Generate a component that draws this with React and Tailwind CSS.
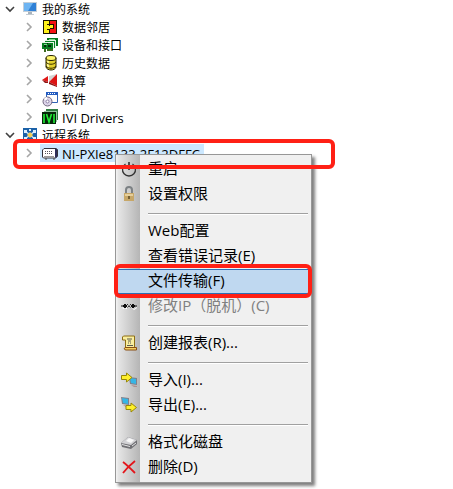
const SANS = 'font-["Open_Sans","Noto_Sans_CJK_SC",sans-serif]';

function Icon({ children }) {
  return (
    <svg className="size-4 shrink-0" viewBox="0 0 16 16" aria-hidden="true">
      {children}
    </svg>
  );
}

function MonitorIcon() {
  return (
    <Icon>
      <path d="M1 1h14v10H1z" fill="#c3ced8" />
      <path d="M2 2h12v8H2z" fill="#2f80d6" />
      <path d="M2 2h9L6 10H2z" fill="#6db4f2" />
      <path d="M6 11h4v2H6z" fill="#a9b3bc" />
      <path d="M4 13h8v1H4z" fill="#c3cbd2" />
    </Icon>
  );
}

function PuzzleIcon() {
  return (
    <Icon>
      <g shapeRendering="crispEdges">
        <path d="M1 1h14v14H1z" fill="#1a1400" />
        <path d="M2 2h5v12H2z" fill="#fff21a" />
        <path d="M7 2h7v12H7z" fill="#f51212" />
        <path d="M7 6h4v4H7z" fill="#fff21a" />
        <path d="M7.500 2v4.500M5 5.500h3M8 5.500h3.500v4H7.500M5 10.500h3M7.500 10v4" fill="none" stroke="#201000" />
      </g>
    </Icon>
  );
}

function BoardsIcon() {
  return (
    <Icon>
      <g shapeRendering="crispEdges">
        <path d="M5 1h11v8H5z" fill="#087820" />
        <path d="M3 3h11v8H3z" fill="#e4f4e4" />
        <path d="M3 4h10v7H3z" fill="#0a8226" />
        <path d="M0 5h12v7H0z" fill="#e8f6e8" />
        <path d="M0 6h11v6H0z" fill="#087d20" />
        <path d="M2 8h2v2H2zM6 8h3v2H6zM5 6h1v1H5z" fill="#03270a" />
        <path d="M2 12h2v3H2zM5 12h6v2H5z" fill="#3c6b20" />
        <path d="M7 2h6M2 7h3" stroke="#7bdc8c" />
      </g>
    </Icon>
  );
}

function DatabaseIcon() {
  return (
    <Icon>
      <path d="M4 3v9c1 4 9 4 10 0V3z" fill="#e3d02c" stroke="#242000" />
      <path d="M5 5v8h2V6z" fill="#fff78c" />
      <ellipse cx="9" cy="3" rx="5" ry="2.500" fill="#fff56a" stroke="#242000" />
      <path d="M4 7c2 3 8 3 10 0M4 11c2 3 8 3 10 0" fill="none" stroke="#393000" />
    </Icon>
  );
}

function ScaleIcon() {
  return (
    <Icon>
      <path d="M0 7l6-4v6z" fill="#e01818" />
      <path d="M0 7l6 2v1H3z" fill="#8e1414" />
      <path d="M7 3l8-2-8 8z" fill="#d4d4d4" />
      <path d="M15 1v12L7 9z" fill="#dc1414" />
      <path d="M7 9l8 4v1L7 11z" fill="#8e1010" />
    </Icon>
  );
}

function SoftwareIcon() {
  return (
    <Icon>
      <path d="M4.500 1.500h11v10h-11z" fill="#fff" stroke="#2f62b5" />
      <path d="M4 1h12v3H4z" fill="#245cc0" />
      <path d="M6 2.500h8" stroke="#fff" strokeDasharray="1 1" />
      <circle cx="5.500" cy="10.500" r="4.500" fill="#ddd5ea" stroke="#71677f" />
      <path d="M5.500 10.500L2 8a4 4 0 0 1 3-2z" fill="#fff" />
      <circle cx="5.500" cy="10.500" r="1.500" fill="#fff" stroke="#8c80a6" />
    </Icon>
  );
}

function IviIcon() {
  return (
    <Icon>
      <path d="M4 0h12v11H4z" fill="#2f7d41" />
      <path d="M2 2h13v11H2z" fill="#8ec79a" />
      <path d="M0 3h14v12H0z" fill="#062408" />
      <path d="M2 5v9M4.500 5l2.500 8 2.500-8M12 5v9" fill="none" stroke="#20ee36" strokeWidth="1.600" />
    </Icon>
  );
}

function NetworkIcon() {
  return (
    <Icon>
      <path d="M1 1h14v14H1z" fill="#1b61a8" />
      <path d="M3 4l10 8M13 4L3 12" stroke="#cfe6fa" strokeWidth="1.500" />
      <path d="M2 3h3v3H2zM11 3h3v3h-3zM2 10h3v3H2zM11 10h3v3h-3zM7 2h2v2H7z" fill="#dcefff" />
      <path d="M8 5l3 3-3 3-3-3z" fill="#f4cf55" />
      <path d="M7 12h2v2H7z" fill="#6fb3ea" />
    </Icon>
  );
}

function ChassisIcon() {
  return (
    <Icon>
      <path d="M2 3.500h12l1.500 1v7l-2 1.500H1.500L.5 12V5z" fill="#fff" stroke="#33333b" />
      <path d="M13 4h2v8l-2 1z" fill="#2c2c58" />
      <path d="M3.500 6v4M5.500 6v4M7.500 6v4M9.500 6v4" stroke="#55555d" strokeDasharray="1 1" />
      <path d="M2 11.500h10" stroke="#9a9a9a" />
      <path d="M3 14h2M11 14h2" stroke="#444" />
    </Icon>
  );
}

function PowerIcon() {
  return (
    <Icon>
      <path d="M4.500 3a6.500 6.500 0 1 0 7 0" fill="none" stroke="#333" strokeWidth="1.300" />
      <path d="M8 1v8" stroke="#222" strokeWidth="1.500" />
    </Icon>
  );
}

function LockIcon() {
  return (
    <Icon>
      <path d="M5 8V4c0-4 6-4 6 0v4" fill="none" stroke="#7c8184" strokeWidth="2" />
      <path d="M3 7h10v8H3z" fill="#c7a768" />
      <path d="M4 8h8v2H4z" fill="#e6cf9b" />
      <path d="M7 10h2v3H7z" fill="#745e33" />
    </Icon>
  );
}

function AddressIcon() {
  return (
    <Icon>
      <path d="M1 9l3 2 2-2v2H2zM10 9l3 2 3-2v1l-3 2z" fill="#fff" />
      <path d="M0 8h2l2-2 2 2-2 2-2-2M16 8h-2l-2-2-2 2 2 2 2-2" fill="#0d0d0d" stroke="#0d0d0d" />
      <path d="M6 6l4 4M10 6l-4 4" stroke="#333" strokeDasharray="2 1" />
    </Icon>
  );
}

function ReportIcon() {
  return (
    <Icon>
      <path d="M2.500 1h11v13h-9V5h-3V2z" fill="#f9ee9e" stroke="#8d6d13" />
      <path d="M4 12.500h11.500V15H5c-2 0-2-2-1-2.500z" fill="#f2d05f" stroke="#8a4f14" />
      <path d="M6 4h5M7 6h3M7 8h1M9 8h1M6 10.500h6" stroke="#5a5a50" />
    </Icon>
  );
}

function ComputerShape() {
  return (
    <g>
      <path d="M0 0l8 1v7L1 7z" fill="#80808c" />
      <path d="M1 1l6 1v5L2 6z" fill="#36b6e6" />
      <path d="M2 8l6 1v1H5z" fill="#ae8f8f" />
    </g>
  );
}

function ImportIcon() {
  return (
    <Icon>
      <g transform="translate(8 5)">
        <ComputerShape />
      </g>
      <path d="M.5 3.500h5V1l5.500 4.500L5.500 10V7.500h-5z" fill="#fff02a" stroke="#978708" />
    </Icon>
  );
}

function ExportIcon() {
  return (
    <Icon>
      <ComputerShape />
      <path d="M5 8.500h5V6l5.500 4.500L10 15v-2.500H5z" fill="#fff02a" stroke="#978708" />
    </Icon>
  );
}

function DiskIcon() {
  return (
    <Icon>
      <path d="M0 9l7-6 9 3v4l-6 5-9-2z" fill="#707074" />
      <path d="M0 9l7-6 9 3-6 5z" fill="#d2d2d5" />
      <path d="M5 7l3-3 5 2-3 3z" fill="#f8f8f8" />
      <path d="M1 10.500l8 2M11 12l4-3" stroke="#e4e4e4" />
    </Icon>
  );
}

function DeleteIcon() {
  return (
    <Icon>
      <path d="M2 3c4 3 8 7 12 11M14 2C9 6 5 10 2 14" fill="none" stroke="#e3151b" strokeWidth="1.800" />
    </Icon>
  );
}

function Chevron({ open }) {
  return (
    <svg className="size-3 shrink-0" viewBox="0 0 12 12" aria-hidden="true">
      {open ? (
        <path d="M2 4l4 4 4-4" fill="none" stroke="#404040" strokeWidth="1.600" />
      ) : (
        <path d="M3 2l4 4-4 4" fill="none" stroke="#a6a6a6" strokeWidth="1.600" />
      )}
    </svg>
  );
}

function TreeRow({ label, icon, open = false, child = false, selected = false, latin = false }) {
  return (
    <li
      role="treeitem"
      aria-expanded={open}
      aria-selected={selected}
      className={child ? "flex h-[18px] items-center pl-6" : "flex h-[18px] items-center pl-1"}
    >
      <button type="button" aria-label={label} className="mr-[6px] flex">
        <Chevron open={open} />
      </button>
      <span
        className={
          selected
            ? "-ml-[2px] flex h-full items-center gap-1 bg-[#cce8ff] pr-1 pl-[2px]"
            : "flex items-center gap-1"
        }
      >
        {icon}
        <span className={latin ? "pt-[2px] text-[13px]/4 whitespace-nowrap" : "pt-[2px] text-xs whitespace-nowrap"}>
          {label}
        </span>
      </span>
    </li>
  );
}

function MenuItem({ label, icon, active = false, disabled = false }) {
  return (
    <li role="none">
      <button
        type="button"
        role="menuitem"
        disabled={disabled}
        className={
          active
            ? "flex h-[25px] w-full items-center border-y border-[#2c6fb5] bg-[#bfd8f0] pb-[2px] text-left"
            : "flex h-[25px] w-full items-center pb-[2px] text-left disabled:text-[#808080]"
        }
      >
        <span className="mr-2 flex w-[23px] shrink-0 justify-center">{icon}</span>
        <span className="whitespace-nowrap">{label}</span>
      </button>
    </li>
  );
}

function Separator() {
  return (
    <li role="separator" className="flex h-3 items-center pt-[2px] pr-[2px] pl-[31px]">
      <span className="h-[2px] w-full border-t border-b border-t-[#a0a0a0] border-b-white" />
    </li>
  );
}

export default function App() {
  return (
    <main className={`relative min-h-screen bg-white text-black ${SANS}`}>
      <ul role="tree" aria-label="系统">
        <TreeRow label="我的系统" icon={<MonitorIcon />} open />
        <TreeRow label="数据邻居" icon={<PuzzleIcon />} child />
        <TreeRow label="设备和接口" icon={<BoardsIcon />} child />
        <TreeRow label="历史数据" icon={<DatabaseIcon />} child />
        <TreeRow label="换算" icon={<ScaleIcon />} child />
        <TreeRow label="软件" icon={<SoftwareIcon />} child />
        <TreeRow label="IVI Drivers" icon={<IviIcon />} child latin />
        <TreeRow label="远程系统" icon={<NetworkIcon />} open />
        <TreeRow label="NI-PXIe8133-2F12DFFC" icon={<ChassisIcon />} child selected latin />
      </ul>

      <ul
        role="menu"
        className="absolute top-[154px] left-[115px] w-[197px] border border-[#979797] bg-[#f0f0f0] bg-[linear-gradient(to_right,#f0f0f0_1px,#e6e6e6_2px,#b5b5b5_24px,#f0f0f0_24px)] px-px py-[2px] text-[15px] shadow-[3px_3px_3px_rgba(0,0,0,0.5)]"
      >
        <MenuItem label="重启" icon={<PowerIcon />} />
        <MenuItem label="设置权限" icon={<LockIcon />} />
        <Separator />
        <MenuItem label="Web配置" />
        <MenuItem label="查看错误记录(E)" />
        <MenuItem label="文件传输(F)" active />
        <MenuItem label="修改IP（脱机）(C)" icon={<AddressIcon />} disabled />
        <Separator />
        <MenuItem label="创建报表(R)..." icon={<ReportIcon />} />
        <Separator />
        <MenuItem label="导入(I)..." icon={<ImportIcon />} />
        <MenuItem label="导出(E)..." icon={<ExportIcon />} />
        <Separator />
        <MenuItem label="格式化磁盘" icon={<DiskIcon />} />
        <MenuItem label="删除(D)" icon={<DeleteIcon />} />
      </ul>

      <div className="pointer-events-none absolute top-[139px] left-[13px] h-[30px] w-[322px] rounded-md border-4 border-[#ff2015]" />
      <div className="pointer-events-none absolute top-[264px] left-[114px] h-[34px] w-[198px] rounded-md border-4 border-[#ff2015]" />
    </main>
  );
}
